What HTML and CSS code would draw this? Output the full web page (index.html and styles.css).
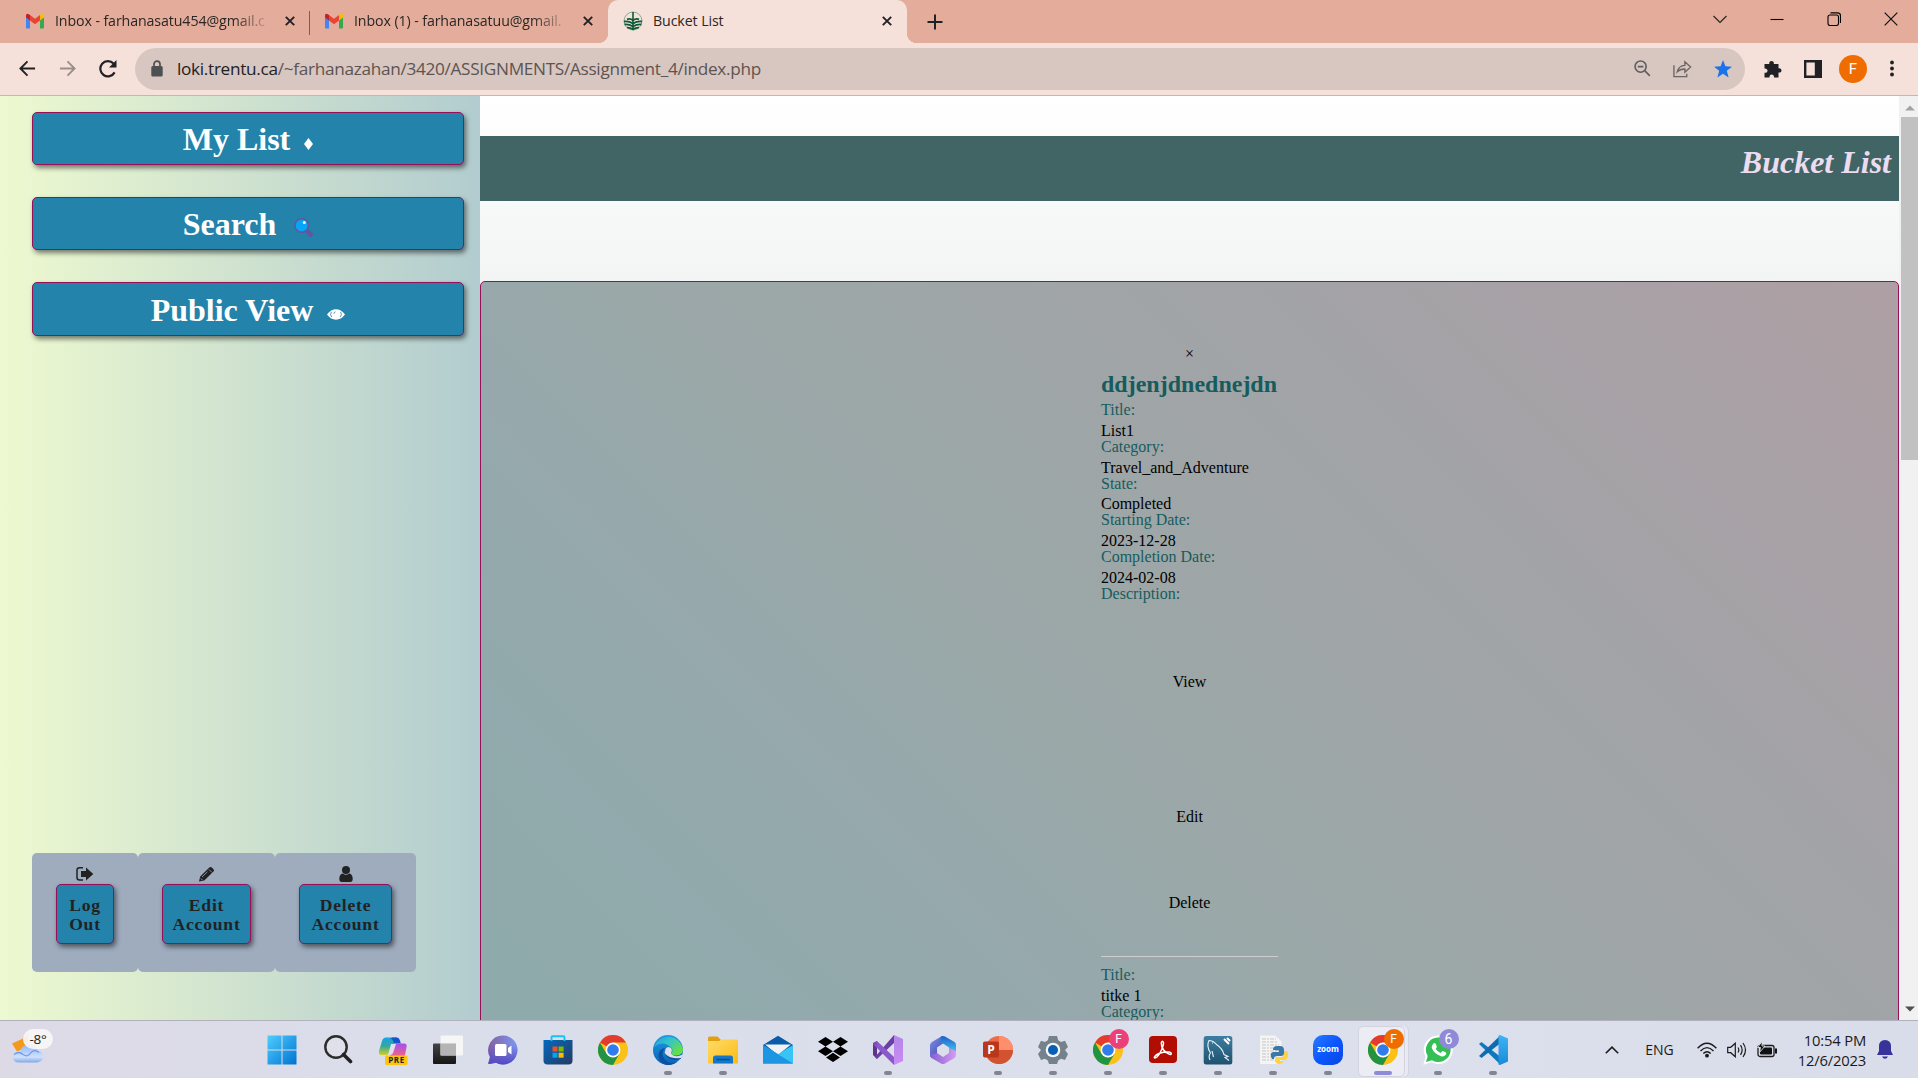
FILE: index.html
```html
<!DOCTYPE html>
<html lang="en">
<head>
<meta charset="utf-8">
<title>Bucket List</title>
<link rel="stylesheet" href="styles.css">
</head>
<body>
<svg class="defs" aria-hidden="true">
  <defs>
    <linearGradient id="gWin" gradientUnits="userSpaceOnUse" x1="0" y1="0" x2="30" y2="30"><stop offset="0" stop-color="#4fd0ff"/><stop offset="1" stop-color="#0070d0"/></linearGradient>
    <linearGradient id="gCopA" x1="0" y1="0" x2="0" y2="1"><stop offset="0" stop-color="#18a2e8"/><stop offset=".5" stop-color="#35a99b"/><stop offset="1" stop-color="#d6ce25"/></linearGradient>
    <linearGradient id="gCopB" x1="0" y1="0" x2="0" y2="1"><stop offset="0" stop-color="#a64ff0"/><stop offset="1" stop-color="#fb6a72"/></linearGradient>
    <linearGradient id="gDark" x1="0" y1="0" x2="0" y2="1"><stop offset="0" stop-color="#444"/><stop offset="1" stop-color="#161616"/></linearGradient>
    <linearGradient id="gChat" x1="0" y1="0" x2="1" y2="0"><stop offset="0" stop-color="#83629f"/><stop offset="1" stop-color="#7d97f3"/></linearGradient>
    <linearGradient id="gChatB" x1="0" y1="0" x2="0" y2="1"><stop offset=".3" stop-color="#5a50c8" stop-opacity="0"/><stop offset="1" stop-color="#5249c6"/></linearGradient>
    <linearGradient id="gStore" x1="0" y1="0" x2="1" y2="1"><stop offset="0" stop-color="#0669bd"/><stop offset="1" stop-color="#253a62"/></linearGradient>
    <linearGradient id="gEdgeA" x1="0" y1="0" x2="1" y2=".6"><stop offset="0" stop-color="#229fe0"/><stop offset=".5" stop-color="#34c4c8"/><stop offset="1" stop-color="#68df43"/></linearGradient>
    <linearGradient id="gEdgeB" x1="0" y1="0" x2="0" y2="1"><stop offset="0" stop-color="#1c9be6"/><stop offset="1" stop-color="#0b62b5"/></linearGradient>
    <linearGradient id="gFold" x1="0" y1="0" x2="1" y2="1"><stop offset="0" stop-color="#ffdb6b"/><stop offset="1" stop-color="#fcbb12"/></linearGradient>
    <linearGradient id="gVs" x1="0" y1="0" x2="0" y2="1"><stop offset="0" stop-color="#b586ea"/><stop offset="1" stop-color="#c98cf5"/></linearGradient>
    <linearGradient id="gMA" x1="0" y1="0" x2="1" y2="1"><stop offset="0" stop-color="#7d8dea"/><stop offset="1" stop-color="#3c45a7"/></linearGradient>
    <linearGradient id="gMB" x1="0" y1="0" x2="0" y2="1"><stop offset="0" stop-color="#1a60d0"/><stop offset="1" stop-color="#4ed5ee"/></linearGradient>
    <linearGradient id="gMC" x1="0" y1="0" x2="1" y2="0"><stop offset="0" stop-color="#8460cf"/><stop offset="1" stop-color="#d59cf3"/></linearGradient>
    <linearGradient id="gSql" x1="0" y1="0" x2="0" y2="1"><stop offset="0" stop-color="#3c7ea2"/><stop offset="1" stop-color="#1f516e"/></linearGradient>
    <linearGradient id="gZoom" x1="0" y1="0" x2="1" y2="1"><stop offset="0" stop-color="#2a7bff"/><stop offset=".5" stop-color="#0b57ff"/><stop offset="1" stop-color="#0946e0"/></linearGradient>
    <linearGradient id="gCloud" x1="0" y1="0" x2="0" y2="1"><stop offset="0" stop-color="#8fb8f5"/><stop offset=".7" stop-color="#cfe0fb"/><stop offset="1" stop-color="#7fa9ea"/></linearGradient>
    <linearGradient id="gCode" x1="0" y1="0" x2="0" y2="1"><stop offset="0" stop-color="#3fb3f5"/><stop offset="1" stop-color="#1b8ad8"/></linearGradient>

    <symbol id="gmail" viewBox="0 0 18 16">
      <path d="M0 3v11.5q0 .9.9.9H4V6z" fill="#4285f4"/><path d="M14 6v9.4h3.1q.9 0 .9-.9V3z" fill="#34a853"/>
      <path d="M4 2v5.5l5 3.8 5-3.8V2L9 5.8z" fill="#ea4335"/><path d="M0 2.6v2L4 7.5V2L2.9 1.2Q0-.4 0 2.6z" fill="#c5221f"/><path d="M18 2.6v2l-4 2.9V2l1.1-.8Q18-.4 18 2.6z" fill="#fbbc04"/>
    </symbol>
    <symbol id="cross" viewBox="0 0 10 10"><path d="M.8.8l8.4 8.4M9.2.8L.8 9.2" stroke="#202124" stroke-width="1.9"/></symbol>
    <symbol id="chrome" viewBox="0 0 30 30">
      <circle cx="15" cy="15" r="15" fill="#fbc116"/>
      <path d="M15 15L2 7.5A15 15 0 0 1 28 7.5z" fill="#e33b2e"/>
      <path d="M2 7.5A15 15 0 0 0 15 30l6.5-11.3L15 22.5 8.500 18.700z" fill="#229342"/>
      <path d="M15 7.500H28L21.500 18.700 15 15z" fill="#fbc116"/>
      <circle cx="15" cy="15" r="7.400" fill="#fff"/><circle cx="15" cy="15" r="5.800" fill="#2f7cea"/>
    </symbol>
  </defs>
</svg>

<div class="screen">
  <header class="tabs">
    <div class="tab tab-first"><svg class="gm"><use href="#gmail"/></svg><span class="tab-text">Inbox - farhanasatu454@gmail.c</span><svg class="x"><use href="#cross"/></svg></div>
    <div class="tab tab-second"><svg class="gm"><use href="#gmail"/></svg><span class="tab-text">Inbox (1) - farhanasatuu@gmail.</span><svg class="x"><use href="#cross"/></svg></div>
    <div class="tab tab-active">
      <svg class="fav" viewBox="0 0 20 20"><circle cx="10" cy="10" r="9" fill="none" stroke="#84ab98" stroke-width="1"/><path d="M10 1v18" stroke="#0d5a38" stroke-width="1.600"/><path d="M4 8.300q3-1.300 6 1 3-2.300 6-1M1 10.500q5-.5 9 2 4-2.500 9-2M1.600 13.500q4.400-.5 8.400 2 4-2.500 8.400-2M4 16.600q3-.3 6 1.700 3-2 6-1.700" fill="none" stroke="#0d5a38" stroke-width="1.800"/></svg>
      <span class="tab-text">Bucket List</span><svg class="x"><use href="#cross"/></svg>
    </div>
    <svg class="plus" viewBox="0 0 16 16"><path d="M8 .5v15M.5 8h15" stroke="#202124" stroke-width="2"/></svg>
    <div class="controls">
      <svg viewBox="0 0 14 14"><path d="M.5 4L7 10.500 13.500 4" fill="none" stroke="#222" stroke-width="1.100"/></svg>
      <svg viewBox="0 0 14 14"><path d="M.5 7.500h13" stroke="#000" stroke-width="1.100"/></svg>
      <svg viewBox="0 0 14 14"><rect x="1" y="3" width="10.500" height="10.500" rx="2" fill="none" stroke="#000" stroke-width="1.100"/><path d="M3.500.9h7q3 0 3 3v7" fill="none" stroke="#000" stroke-width="1.100"/></svg>
      <svg viewBox="0 0 14 14"><path d="M.7.7l12.600 12.600M13.300.7L.7 13.300" stroke="#111" stroke-width="1.200"/></svg>
    </div>
  </header>

  <div class="toolbar">
    <svg class="nav n1" viewBox="0 0 18 18"><path d="M17 9H2M9 1.500L1.500 9 9 16.500" fill="none" stroke="#202124" stroke-width="2"/></svg>
    <svg class="nav n2" viewBox="0 0 18 18"><path d="M1 9h15M9 1.500L16.500 9 9 16.500" fill="none" stroke="#9b8e8a" stroke-width="2"/></svg>
    <svg class="nav n3" viewBox="0 0 18 20"><path d="M15.600 13.400A7.600 7.600 0 1 1 14.500 4.600" fill="none" stroke="#202124" stroke-width="2.200"/><path d="M17.500 1v7.500H10z" fill="#202124"/></svg>
    <div class="omnibox">
      <svg class="lock" viewBox="0 0 12 17"><rect x=".3" y="6" width="11.400" height="10.500" rx="1.500" fill="#4e4f53"/><path d="M3 7V4.200a3 3 0 0 1 6 0V7" fill="none" stroke="#4e4f53" stroke-width="1.700"/></svg>
      <span class="url"><b>loki.trentu.ca</b>/~farhanazahan/3420/ASSIGNMENTS/Assignment_4/index.php</span>
      <svg class="o1" viewBox="0 0 18 18"><circle cx="7" cy="7" r="5.900" fill="none" stroke="#5f5f61" stroke-width="1.700"/><path d="M4 7h6M11.300 11.300l5.500 5.500" stroke="#5f5f61" stroke-width="1.700"/></svg>
      <svg class="o2" viewBox="0 0 20 18"><path d="M1 5v12h13.500v-3M4.500 12Q6 5.500 12.500 5.200V1.500L18.500 7l-6 5.500V9Q7.500 8.800 4.500 12z" fill="none" stroke="#6a6563" stroke-width="1.400"/></svg>
      <svg class="o3" viewBox="0 0 18 18"><path d="M9 0l2.400 6.300 6.600.4-5.200 4.100 1.800 6.700L9 13.700l-5.600 3.800 1.800-6.700L0 6.700l6.600-.4z" fill="#1a73e8"/></svg>
    </div>
    <svg class="t1" viewBox="0 0 18 18"><path d="M.5 4h4.800C4.500 0 10.500 0 9.800 4h4.700v4.300c4-.8 4 5 0 4.200v5H10c.5-4-5-4-4.500 0h-5v-4.700c4 .5 4-4.600 0-4.200z" fill="#202124"/></svg>
    <svg class="t2" viewBox="0 0 18 18"><path d="M0 0h18v18H0zM2.400 2.400v13.200h8.400V2.400z" fill="#202124" fill-rule="evenodd"/></svg>
    <span class="avatar">F</span>
    <svg class="t3" viewBox="0 0 4 16"><g fill="#202124"><circle cx="2" cy="2" r="1.900"/><circle cx="2" cy="8" r="1.900"/><circle cx="2" cy="14" r="1.900"/></g></svg>
  </div>

  <div class="page">
    <aside class="sidebar">
      <nav class="menu">
        <a class="btn">My List <svg class="dia" viewBox="0 0 9 12"><path d="M4.500 0L9 6l-4.500 6L0 6z" fill="#fff"/></svg></a>
        <a class="btn">Search <svg class="mag" viewBox="0 0 19 19"><path d="M13 13l3.600 3.600" stroke="#66549b" stroke-width="4.400" stroke-linecap="round"/><circle cx="7.700" cy="7.500" r="6.700" fill="#06a5f5" stroke="#66549b" stroke-width="1.400"/><circle cx="10.300" cy="4.500" r="1.500" fill="#fff"/></svg></a>
        <a class="btn btn-tall">Public View <svg class="eye" viewBox="0 0 18 11"><path d="M0 5.500Q4 .3 9 .3t9 5.200q-4 5.200-9 5.200T0 5.500z" fill="#fff"/><path d="M4.400 3Q2.500 5.500 4.800 8M13.600 3q1.900 2.500-.4 5M6.800 4.800q.2-1.700 1.700-2" fill="none" stroke="#2383ab" stroke-width=".8"/></svg></a>
      </nav>
      <div class="account">
        <div class="tile tile-a"><svg viewBox="0 0 18 16"><path d="M7 1.700H3.500Q1 1.700 1 4v7.500q0 2.500 2.500 2.500H7" fill="none" stroke="#222" stroke-width="1.500"/><path d="M5 5h5V1.500L17.300 8 10 14.500V11H5z" fill="#222"/></svg><a class="btn small">Log<br>Out</a></div>
        <div class="tile tile-b"><svg viewBox="0 0 18 16"><path d="M1 15.500l1.200-5L11.300 1.600q1.200-1.200 2.500 0l1.700 1.600q1.200 1.200 0 2.400L6.300 14.600z" fill="#222"/><path d="M11 3.500l3 3M4 11l5.500-5.300M2.800 12.400l1.800 1.800" stroke="#9eacbe" stroke-width=".8"/></svg><a class="btn small">Edit<br>Account</a></div>
        <div class="tile tile-c"><svg viewBox="0 0 18 16"><circle cx="9" cy="4" r="4" fill="#222"/><path d="M2.300 13q0-5 3.500-5.500Q9 10 12.200 7.500q3.500.5 3.500 5.500 0 3-2.500 3H4.800q-2.500 0-2.500-3z" fill="#222"/></svg><a class="btn small">Delete<br>Account</a></div>
      </div>
    </aside>
    <main class="main">
      <h1 class="banner">Bucket List</h1>
      <section class="card">
        <div class="item">
          <span class="close">×</span>
          <h2>ddjenjdnednejdn</h2>
          <dl>
            <dt>Title:</dt><dd>List1</dd>
            <dt>Category:</dt><dd>Travel_and_Adventure</dd>
            <dt>State:</dt><dd>Completed</dd>
            <dt>Starting Date:</dt><dd>2023-12-28</dd>
            <dt>Completion Date:</dt><dd>2024-02-08</dd>
            <dt>Description:</dt>
          </dl>
          <a class="act view">View</a>
          <a class="act edit">Edit</a>
          <a class="act del">Delete</a>
          <hr>
          <dl>
            <dt>Title:</dt><dd>titke 1</dd>
            <dt>Category:</dt>
          </dl>
        </div>
      </section>
    </main>
    <div class="scroll">
      <svg viewBox="0 0 10 6"><path d="M5 .5L10 5.500H0z" fill="#a3a3a3"/></svg>
      <div class="thumb"></div>
      <svg viewBox="0 0 10 6"><path d="M5 5.500L10 .5H0z" fill="#505050"/></svg>
    </div>
  </div>

  <footer class="taskbar">
    <div class="weather">
      <svg viewBox="0 0 32 30"><path d="M0 9l10-4.500L16 0v12L5 17z" fill="#f39a1d"/><path d="M7 28Q1 28 1 22.500 1 17 8 17 10 10 17 10t9 6q5 1 5 6t-6 6z" fill="url(#gCloud)"/><path d="M2 20q5-4 9 0 5 3 7-1 4-5 9-1" fill="none" stroke="#6f9de6" stroke-width="1.200"/></svg>
      <span class="temp">-8°</span>
    </div>
    <div class="apps">
      <div class="app start"><svg viewBox="0 0 30 30"><path d="M.5.500h14v14H.5zM15.500.500h14v14h-14zM.5 15.500h14v14H.5zM15.500 15.500h14v14h-14z" fill="url(#gWin)"/></svg></div>
      <div class="app"><svg viewBox="0 0 30 30"><circle cx="13" cy="12" r="10.700" fill="#e3e2ec" fill-opacity=".6" stroke="#2c2c2c" stroke-width="2.400"/><path d="M20.500 19.500l7 7" stroke="#222" stroke-width="3.600" stroke-linecap="round"/></svg></div>
      <div class="app"><svg viewBox="0 0 30 30"><path d="M8 2.500h11L12 17q-1 3-4 3H3q-2.500 0-2-4L4 6q1-3.500 4-3.500z" fill="url(#gCopA)"/><path d="M14 2.500h5q2 0 3 3l.8 3H16q-1.500-6-4-4z" fill="#1753c9"/><path d="M17.500 8.500H26q3.500 0 2.500 4L27 20q-1 3-4 3H11z" fill="url(#gCopB)"/><path d="M13 9h5l-3 9q-1 2-3 2h-2z" fill="#dfdfef"/><rect x="7" y="20.500" width="22.500" height="9.500" rx="1.500" fill="#ffc40c"/><text x="18.500" y="28.200" text-anchor="middle" class="pre">PRE</text></svg></div>
      <div class="app"><svg viewBox="0 0 30 30"><rect x="0" y="8.500" width="23" height="20.500" rx="1" fill="url(#gDark)"/><rect x="7.500" y=".5" width="22.500" height="20" rx="1" fill="#f8f8f8" fill-opacity=".9"/><path d="M7.500 8.500H23v12H7.500z" fill="#b5b5b5"/></svg></div>
      <div class="app"><svg viewBox="0 0 30 30"><path d="M15 .5a14.500 14.500 0 1 1-7 27.200L1.500 29q-1.500 0-1-1.500L2 22A14.500 14.500 0 0 1 15 .5z" fill="url(#gChat)"/><path d="M15 .5a14.500 14.500 0 1 1-7 27.200L1.500 29q-1.500 0-1-1.500L2 22A14.500 14.500 0 0 1 15 .5z" fill="url(#gChatB)"/><rect x="7" y="9" width="11.500" height="12" rx="1.500" fill="#fff"/><path d="M20 13l3.500-2.500v9L20 17z" fill="#fff"/></svg></div>
      <div class="app"><svg viewBox="0 0 30 30"><path d="M.5 5h29v20.500q0 4-4 4h-21q-4 0-4-4z" fill="url(#gStore)"/><path d="M8.500 6V2.500q0-1.300 1.300-1.300h10.400q1.300 0 1.300 1.300V6" fill="none" stroke="#1cc1f4" stroke-width="1.900"/><path d="M9.500 11.500h5v5h-5z" fill="#f25022"/><path d="M15.600 11.500h5v5h-5z" fill="#7fba00"/><path d="M9.500 17.700h5v5h-5z" fill="#00a4ef"/><path d="M15.600 17.700h5v5h-5z" fill="#ffb900"/></svg></div>
      <div class="app"><svg><use href="#chrome"/></svg></div>
      <div class="app run"><svg viewBox="0 0 30 30"><circle cx="15" cy="15" r="15" fill="url(#gEdgeB)"/><path d="M1 12A15 15 0 0 1 30 14q0 6-7 6.500-5 0-4.500-2.500 2-3-.5-5.500Q10 5 1 12z" fill="url(#gEdgeA)"/><path d="M12 13q-5 6 0 12 5 5 12 2-5 4-11 2.800Q6 28 5.500 20 6 14 12 13z" fill="#0d4fa0"/><path d="M12 17q0-5 4-5 3.500 1 2.800 4-1.500 3 1.700 4.500 4 1.500 8-.5l1.500.5-2.500 3.500q-7 2-11-.5-4-2.500-4.500-6.500z" fill="#0d4fa0"/><path d="M12 17q0-5 4-5 3.500 1 2.800 4-1.500 3 1.700 4.500 4 1.500 8-.5 1.500-.6 1.500.5-1 3-2.500 2.500-5 .5-9-.5-5-1.500-7-5z" fill="#dcdfec"/></svg></div>
      <div class="app run"><svg viewBox="0 0 30 30"><path d="M0 3q0-1.500 1.500-1.500h8L13 5v5H0z" fill="#e0a010"/><path d="M0 6h11l2.500-1.500H28.500Q30 4.500 30 6v22.500H0z" fill="url(#gFold)"/><path d="M5 28.500V23q0-2.500 2.500-2.500h15Q25 20.500 25 23v5.500z" fill="#1478c8"/><path d="M9 24.500h12" stroke="#0a4d8d" stroke-width="1.500" stroke-linecap="round"/></svg></div>
      <div class="app"><svg viewBox="0 0 30 30"><path d="M0 10L15 .800 30 10v8H0z" fill="#0a5ba8"/><path d="M2 9.500h26L15 20z" fill="#f0f1f5"/><path d="M0 10l30 18.500H0z" fill="#1f9be5"/><path d="M30 10L0 28.500h30z" fill="#39c4f5"/><path d="M0 28.500V10l30 18.500z" fill="#1c95e2"/></svg></div>
      <div class="app"><svg viewBox="0 0 30 30"><path d="M7.500 2L15 6.700 7.500 11.400 0 6.700zM22.500 2L30 6.700l-7.500 4.700L15 6.700zM7.500 11.600L15 16.300 7.500 21 0 16.300zM22.500 11.600L30 16.300 22.500 21 15 16.300zM15 17.800l7 4.600-7 4.600-7-4.600z" fill="#000"/></svg></div>
      <div class="app run"><svg viewBox="0 0 30 30"><path d="M0 8l4-2v18l-4-4z" fill="#5c3593"/><path d="M4 24L21 8V0L2 22z" fill="#6a3fa6"/><path d="M4 6l17 16v8L0 9z" fill="#8a5bc8"/><path d="M0 9l4-3v5z" fill="#7c4fb4"/><path d="M21 0l9 4v22l-9 4z" fill="url(#gVs)"/></svg></div>
      <div class="app"><svg viewBox="0 0 30 30"><path d="M14 1L4 7Q2 8.500 2 10v10q0 2 2 3l5-3v-7.500l9-6z" fill="url(#gMA)"/><path d="M13 1.500q2-1 4 0L26.500 7q1.500 1 1.500 3v10l-7-4v-3.500l-9-6z" fill="url(#gMB)"/><path d="M28 16v4q0 2-1.500 3L17 28.500q-2 1-4 0L3.500 23Q2 22 2 20l7-2 6 4 6-4v-5z" fill="url(#gMC)"/><path d="M15 9.700l5 2.700v5.400L15 20.700l-5-2.700v-5.500z" fill="#dcdfeb"/></svg></div>
      <div class="app run"><svg viewBox="0 0 30 30"><circle cx="16" cy="15" r="14" fill="#ed6c47"/><path d="M16 1a14 14 0 0 1 14 14H16z" fill="#ff8f6b"/><path d="M30 15a14 14 0 0 1-28 0z" fill="#d35230"/><rect x="0" y="6.500" width="16" height="16" rx="1.800" fill="#b9371c"/><text x="8" y="18.800" text-anchor="middle" class="ppt">P</text></svg></div>
      <div class="app run"><svg viewBox="0 0 30 30"><path d="M11 1h8l1.200 4.300 2.800 1.600 4-1.200 3 6.300-3 3 3 4-3 6-4-1.200-2.800 1.600L19 29h-8l-1.200-3.600L7 23.800 3 25l-3-6 3-4-3-3 3-6.300 4 1.200 2.800-1.600z" fill="#75828b"/><circle cx="15" cy="15" r="7.300" fill="#f4f6f8"/><circle cx="15" cy="15" r="5" fill="#0a5fb4"/></svg></div>
      <div class="app run"><svg><use href="#chrome"/></svg><span class="badge pink">F</span></div>
      <div class="app run"><svg viewBox="0 0 30 30"><rect x="1" y="1" width="28" height="27" rx="4" fill="#b20d02"/><path d="M6.500 22c2-3.500 9-5.500 14.500-5 3 .5 3 3 .5 2.300C17 18 13 13 13.300 8c.2-2.500 2.700-2 2.200.8-.8 4.500-4 11-6.500 13.200-1.500 1.200-3.300 1.200-2.500 0z" fill="none" stroke="#fff" stroke-width="1.500"/></svg></div>
      <div class="app run"><svg viewBox="0 0 30 30"><rect x=".7" y="1" width="28.600" height="28.500" rx="2.500" fill="url(#gSql)"/><path d="M7 25q-2-4 .5-7Q3 11 6 5.500q4 0 7.500 4 6 4 7.500 10l4 2-3 1 4 3M9 16l1.500 6M9 8h1" fill="none" stroke="#e8f0f5" stroke-width="1.100"/><path d="M21 4l5 5M24 3l3 3" stroke="#fff" stroke-width="2"/></svg></div>
      <div class="app run"><svg viewBox="0 0 30 30"><path d="M2 .5h15l6.500 6V29H2z" fill="#f4f4f4"/><path d="M4 4h14M4 7h16M4 10h17M4 13h17M4 16h17M4 19h17M4 22h17M4 25h17" stroke="#c5c5c5" stroke-dasharray="4 1 2 1"/><path d="M15 15q0-4 4-4h3q4 0 4 4v3q0 3-3 3h-4q-3 0-3 3h-2q-3-6 1-7h6v-1.500z" fill="#3b78a8"/><path d="M26 16h1.500q3 0 2.500 4 0 5-4 5h-4v1h3q0 3-3.500 3-4.500 0-4.500-4 0-3 3-3h4q2 0 2-3z" fill="#ffd246"/></svg></div>
      <div class="app run"><svg viewBox="0 0 30 30"><rect width="30" height="30" rx="10" fill="url(#gZoom)"/><text x="15" y="17" text-anchor="middle" class="zm">zoom</text></svg></div>
      <div class="app run current"><svg><use href="#chrome"/></svg><span class="badge orange">F</span></div>
      <div class="app run"><svg viewBox="0 0 30 30"><path d="M15.500.5A14.300 14.300 0 1 1 8.600 27.300L.3 29.700l2.300-8A14.300 14.300 0 0 1 15.500.5z" fill="#fff"/><path d="M15.500 2.600A12.200 12.200 0 1 1 9 25.200l-6 1.700 1.700-5.800A12.200 12.200 0 0 1 15.500 2.600z" fill="#34bf54"/><path d="M10.500 8.500q1.500-1 2.300.4l1 2.600q.2.800-1.200 2.200 1.900 3.200 5 4.300l1.500-1.700q.6-.6 1.400-.1l2.500 1.400q.8.700-.3 2.500-2 2-4.700 1.200-7-2.500-9.300-8.600-.2-2.500 1.800-4.200z" fill="#fff"/></svg><span class="badge violet">6</span></div>
      <div class="app run"><svg viewBox="0 0 30 30"><path d="M1 9l2.500-2L22 21.500v7.700z" fill="#1079bd"/><path d="M1 21l2.500 2L22 8.500V.8z" fill="#0d6cb0"/><path d="M20.500.5L22 0l8 3.500v23L22 30l-1.500-.5z" fill="url(#gCode)"/></svg></div>
    </div>
    <div class="tray">
      <svg class="up" viewBox="0 0 14 8"><path d="M.8 7.300L7 1.200l6.200 6.100" fill="none" stroke="#1b1b1b" stroke-width="1.600"/></svg>
      <span class="lang">ENG</span>
      <svg class="wifi" viewBox="0 0 20 16"><g fill="none" stroke="#1b1b1b" stroke-width="1.400"><path d="M.6 6.200Q10-3.800 19.400 6.200M3.500 9Q10 2.200 16.500 9M6.300 11.600Q10 7.800 13.700 11.600"/></g><circle cx="10" cy="13.700" r="1.900" fill="#1b1b1b"/></svg>
      <svg class="vol" viewBox="0 0 20 16"><g fill="none" stroke="#1b1b1b" stroke-width="1.200"><path d="M.7 5.300h3L8.300 1.200v13.600L3.700 10.700h-3zM11 5.500q1.700 2.500 0 5M13.500 3.200q3.300 4.800 0 9.600M16 1q5 7 0 14"/></g></svg>
      <svg class="bat" viewBox="0 0 20 16"><rect x="1" y="3.500" width="16" height="11" rx="2" fill="none" stroke="#1b1b1b" stroke-width="1.300"/><rect x="3" y="5.500" width="12" height="7" rx="1" fill="#111"/><path d="M18 6.500h2v5h-2z" fill="#111"/><path d="M5 -.5L.5 5.500h3L2.500 10.500 8 4H5z" fill="#111" stroke="#dcdfeb" stroke-width=".9"/></svg>
      <div class="clock"><span>10:54 PM</span><span>12/6/2023</span></div>
      <svg class="bell" viewBox="0 0 16 19"><path d="M8 0q6 0 6 6.500V11l2 4H0l2-4V6.500Q2 0 8 0zM5 16.500h6q-1 2.300-3 2.300t-3-2.300z" fill="#37339b"/></svg>
    </div>
  </footer>
</div>
</body>
</html>
```
FILE: styles.css
```css
* { box-sizing: border-box; }
body { margin: 0; overflow: hidden; }
svg { display: block; flex: none; }
.defs { position: absolute; width: 0; height: 0; }

.screen {
  width: 1918px;
  height: 1078px;
  display: grid;
  grid-template-rows: 43px 53px 924px 58px;
  font-family: "Open Sans", "Noto Sans", sans-serif;
}

/* Tab strip */
.tabs { display: flex; align-items: center; background: #e4ac9a; overflow: hidden; }
.tab { display: flex; align-items: center; height: 43px; font-size: 14.2px; color: #2a2625; }
.tab-text { flex: 1; margin-left: 11px; white-space: nowrap; }
.tab-first, .tab-second { padding: 0 15px 2px 26px; }
.tab-first .tab-text, .tab-second .tab-text {
  margin-right: 17px;
  letter-spacing: -.1px;
  -webkit-mask-image: linear-gradient(to right, #000 84%, transparent 102%);
  mask-image: linear-gradient(to right, #000 84%, transparent 102%);
}
.tab-first { width: 310px; background: linear-gradient(#776059, #776059) right 11px / 1px 24px no-repeat; }
.tab-second { width: 298px; padding-left: 15px; }
.gm { width: 18px; height: 16px; }
.x { width: 10px; height: 10px; }
.tab-active { position: relative; width: 299px; padding: 0 15px 2px 15px; background: #f5e1da; border-radius: 10px 10px 0 0; letter-spacing: -.1px; }
.tab-active .tab-text { margin-left: 10px; }
.tab-active::before, .tab-active::after { content: ""; position: absolute; bottom: 0; width: 10px; height: 10px; }
.tab-active::before { left: -10px; background: radial-gradient(circle at 0 0, transparent 10px, #f5e1da 10.5px); }
.tab-active::after { right: -10px; background: radial-gradient(circle at 100% 0, transparent 10px, #f5e1da 10.5px); }
.fav { width: 20px; height: 20px; }
.plus { width: 16px; height: 16px; margin-left: 20px; }
.controls { display: flex; gap: 43px; margin-left: auto; padding: 0 20px 6px 0; }
.controls svg { width: 14px; height: 14px; }

/* Toolbar */
.toolbar { display: flex; align-items: center; padding-bottom: 1px; background: #f5e1da; border-bottom: 1px solid #c9b5af; }
.nav { width: 17px; height: 17px; }
.n1 { margin-left: 19px; }
.n2 { margin-left: 23px; }
.n3 { width: 18px; height: 20px; margin-left: 23px; }
.omnibox { display: flex; align-items: center; width: 1610px; height: 42px; margin-left: 18px; border-radius: 21px; background: #d8c6c0; }
.lock { width: 12px; height: 17px; margin-left: 16px; }
.url { flex: 1; margin-left: 14px; font-size: 17.2px; color: #5c5452; letter-spacing: -.3px; }
.url b { font-weight: 400; color: #202124; }
.o1 { width: 17px; height: 17px; }
.o2 { width: 19px; height: 18px; margin-left: 22px; }
.o3 { width: 18px; height: 18px; margin: 0 13px 0 22px; }
.t1 { width: 18px; height: 18px; margin-left: 19px; }
.t2 { width: 18px; height: 18px; margin-left: 22px; }
.t3 { width: 4px; height: 17px; margin-left: 23px; }
.avatar { width: 28px; height: 28px; margin-left: 17px; border-radius: 50%; background: #ef6c00; color: #fff; font: 15px/28px Roboto, sans-serif; text-align: center; }

/* Page */
.page { display: flex; overflow: hidden; font-family: "Liberation Serif", "Times New Roman", serif; }
.sidebar { display: flex; flex-direction: column; justify-content: space-between; width: 480px; padding: 16px 16px 48px 32px; background: linear-gradient(to right, #edf9cf, #b2cccf); }
.menu { display: flex; flex-direction: column; gap: 32px; }
.btn { display: flex; align-items: center; justify-content: center; height: 53px; padding-top: 2px; border: 1px solid #960f57; border-radius: 5px; background: #2383ab; box-shadow: 2px 3px 5px rgba(0, 0, 0, .5); color: #fff; font-size: 32px; font-weight: 700; }
.btn-tall { height: 54px; }
.dia { width: 9px; height: 12px; margin: 8px 0 0 14px; }
.mag { width: 19px; height: 19px; margin: 6px 0 0 18px; }
.eye { width: 18px; height: 11px; margin: 8px 0 0 14px; }
.account { display: flex; }
.tile { display: flex; flex-direction: column; align-items: center; height: 119px; padding: 13px 24px 0; border-radius: 5px; background: #9eacbe; }
.tile svg { width: 18px; height: 16px; margin-bottom: 2px; }
.tile-a { width: 106px; }
.tile-b { width: 137px; }
.tile-c { width: 141px; }
.small { width: 100%; height: 60px; color: #222; font-size: 17.600px; line-height: 19px; letter-spacing: .8px; text-align: center; }

.main { display: flex; flex-direction: column; width: 1419px; padding-top: 40px; background: linear-gradient(#fff 0, #f2f5f4 190px); }
.banner { flex: none; height: 65px; margin: 0 0 80px; padding: 7px 8px 0 0; background: #416565; color: #ecdcf0; font-size: 32px; line-height: 38px; font-style: italic; text-align: right; }
.card { flex: none; height: 760px; border: 1px solid #960f57; border-radius: 5px; background: linear-gradient(225deg, #ae9fa4 0, #a3a3a7 28%, #9ba8a8 58%, #97a8ac 68%, #91aaac 86%, #8faaab 100%); }
.item { display: flex; flex-direction: column; width: 177px; margin: 0 auto; padding-top: 63px; color: #000; font-size: 16px; line-height: 16px; }
.close { height: 18px; line-height: 18px; text-align: center; }
.item h2 { margin: 8px 0 0; color: #175c5c; font-size: 24px; line-height: 26px; }
.item dl { margin: 5px 0 0; }
.item dt { height: 16px; margin-bottom: 4.800px; color: #175c5c; }
.item dd { height: 16px; margin: 0; }
.act { text-align: center; }
.view { margin-top: 67px; }
.edit { margin-top: 119px; }
.del { margin-top: 70px; }
.item hr { width: 177px; height: 1px; margin: 45px 0 5px; border: 0; background: #cfcbcf; }
.scroll { display: flex; flex-direction: column; align-items: center; width: 19px; padding: 9px 0 8px 2px; background: #f1f1f1; }
.scroll svg { width: 10px; height: 6px; }
.thumb { width: 17px; height: 343px; margin: 6px 0 auto; background: #c1c1c1; }

/* Taskbar */
.taskbar { display: flex; border-top: 1px solid #b1b1bd; background: linear-gradient(to right, #dddae6, #dadeeb 25%, #dce0ec 75%, #d9ddea); }
.weather { position: relative; width: 255px; padding: 13px 0 0 12px; }
.weather svg { width: 32px; height: 31px; }
.temp { position: absolute; left: 23px; top: 8px; width: 30px; height: 20px; border-radius: 10px; background: #f8f6f6e8; color: #222; font: 13.500px/20px "Open Sans", sans-serif; text-align: center; letter-spacing: -.3px; }
.apps { display: flex; }
.app { position: relative; display: flex; justify-content: center; width: 55px; height: 57px; padding-top: 14px; }
.app svg { position: relative; width: 30px; height: 30px; }
.start { padding-right: 2px; }
.run::after { content: ""; position: absolute; bottom: 3px; left: 23.500px; width: 8px; height: 4px; border-radius: 2px; background: #83858e; }
.current::before { content: ""; position: absolute; left: 3px; top: 5px; width: 45px; height: 49px; border-radius: 5px; border: 1px solid #d2d3de; background: #ececf5; box-shadow: 3px 0 0 #e8e9f2, 4px 0 0 #d2d3de; }
.current::after { left: 18.500px; width: 18px; background: #8f8ad8; }
.badge { position: absolute; left: 28.500px; top: 8px; width: 20px; height: 20px; border-radius: 50%; color: #fff; font: 12px/20px Roboto, sans-serif; text-align: center; }
.pink { background: #ec407a; }
.orange { background: #ef6c00; }
.violet { background: #8f8ad8; font-size: 14px; }
.pre { font: 700 8px "Open Sans", sans-serif; letter-spacing: .5px; fill: #222; }
.ppt { font: 700 12px "Open Sans", sans-serif; fill: #fff; }
.zm { font: 700 8px "Open Sans", sans-serif; fill: #fff; }
.tray { display: flex; align-items: center; margin-left: auto; padding-right: 25px; color: #1b1b1b; }
.up { width: 14px; height: 8px; margin-right: 26px; }
.lang { margin-right: 23px; font-size: 14px; }
.wifi { width: 20px; height: 16px; margin-right: 10px; }
.vol { width: 20px; height: 16px; margin-right: 10px; }
.bat { width: 20px; height: 16px; margin-right: 21px; }
.clock { display: flex; flex-direction: column; margin-right: 11px; font-size: 14.800px; line-height: 20px; text-align: right; letter-spacing: -.2px; }
.bell { width: 16px; height: 19px; }
```
